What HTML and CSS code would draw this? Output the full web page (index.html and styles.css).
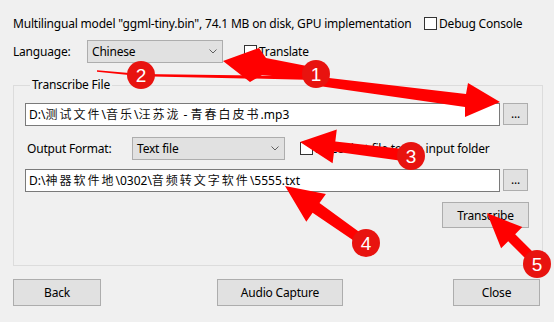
FILE: index.html
```html
<!DOCTYPE html>
<html lang="zh">

<head>
    <meta charset="UTF-8">
    <title>Transcribe</title>
    <link rel="stylesheet" href="styles.css">
</head>

<body>
    <div class="dialog">
        <div class="info-row">
            <span class="model-info">Multilingual model "ggml-tiny.bin", 74.1 MB on disk, GPU implementation</span>
            <label class="check"><span class="box"></span>Debug Console</label>
        </div>

        <div class="lang-row">
            <span class="lang-label">Language:</span>
            <div class="combo lang-combo">
                <span>Chinese</span>
                <svg class="chev" width="8" height="5" viewBox="0 0 8 5"><polyline points="0.5,0.5 4,4 7.5,0.5" /></svg>
            </div>
            <label class="check translate"><span class="box"></span>Translate</label>
        </div>

        <div class="group">
            <span class="legend">Transcribe File</span>

            <div class="path-row">
                <div class="edit">D:\<span class="cjk">测试文件</span>\<span class="cjk">音乐</span>\<span class="cjk">汪苏泷</span> - <span class="cjk">青春白皮书</span>.mp3</div>
                <button class="btn browse">...</button>
            </div>

            <div class="format-row">
                <span class="format-label">Output Format:</span>
                <div class="combo format-combo">
                    <span>Text file</span>
                    <svg class="chev" width="8" height="5" viewBox="0 0 8 5"><polyline points="0.5,0.5 4,4 7.5,0.5" /></svg>
                </div>
                <label class="check place"><span class="box"></span>Place that file to the input folder</label>
            </div>

            <div class="path-row out-row">
                <div class="edit">D:\<span class="cjk">神器软件地</span>\0302\<span class="cjk">音频转文字软件</span>\5555.txt</div>
                <button class="btn browse">...</button>
            </div>

            <div class="action-row">
                <button class="btn transcribe">Transcribe</button>
            </div>
        </div>

        <div class="footer">
            <button class="btn back">Back</button>
            <button class="btn capture">Audio Capture</button>
            <button class="btn close">Close</button>
        </div>
    </div>

    <!-- red annotation marks drawn over the dialog -->
    <svg class="marks" width="554" height="322" viewBox="0 0 554 322">
        <polygon points="97,70.3 141,74 305,76.3 305,79.7 141,76.2 97,71.7" />
        <polygon points="223,61 259,48 266,58 312,67 312,80 262,75 250,82" />
        <polygon points="312,76 466,94 468,83 500,102 465,117 465,107 312,85" />
        <polygon points="411.8,150 335.3,141.4 336.8,129.5 300,142 332.6,163.3 334.1,151.4 410.3,162" />
        <polygon points="368.9,238.9 319.5,203 325.9,194 285,186 306.3,221.8 312.6,212.8 363.1,247.1" />
        <polygon points="540.5,259.5 515.2,234.2 522.3,227.1 487,213 501.1,248.3 508.2,241.2 533.5,266.5" />

        <g class="badge"><circle cx="316" cy="74" r="14" /><text x="316" y="81">1</text></g>
        <g class="badge"><circle cx="141" cy="75" r="14" /><text x="141" y="82">2</text></g>
        <g class="badge"><circle cx="411" cy="156" r="14" /><text x="411" y="163">3</text></g>
        <g class="badge"><circle cx="366" cy="243" r="14" /><text x="366" y="250">4</text></g>
        <g class="badge"><circle cx="537" cy="264" r="14" /><text x="537" y="271">5</text></g>
    </svg>
</body>

</html>
```

FILE: styles.css
```css
body {
    margin: 0;
    width: 554px;
    height: 322px;
    overflow: hidden;
    position: relative;
    background-color: #f0f0f0;
    font-family: "Noto Sans", "Noto Sans CJK SC", sans-serif;
    font-size: 12px;
    letter-spacing: -0.2px;
    color: #000;
}

.dialog {
    padding: 13px 0 0 13px;
}

.info-row {
    display: flex;
    align-items: center;
    height: 20px;
}

.model-info {
    width: 411px;
    white-space: nowrap;
}

.check {
    display: flex;
    align-items: center;
    white-space: nowrap;
}

.box {
    width: 11px;
    height: 11px;
    border: 1px solid #333;
    background-color: #fff;
    margin-right: 2px;
}

.lang-row {
    display: flex;
    align-items: center;
    height: 23px;
    margin-top: 7px;
}

.lang-label {
    width: 74px;
}

.combo {
    box-sizing: border-box;
    height: 23px;
    display: flex;
    align-items: center;
    justify-content: space-between;
    padding: 0 5px 0 4px;
    border: 1px solid #adadad;
    background-color: #e1e1e1;
}

.chev polyline {
    fill: none;
    stroke: #606060;
    stroke-width: 1;
}

.lang-combo {
    width: 136px;
}

.translate {
    margin-left: 21px;
}

.group {
    box-sizing: border-box;
    width: 530px;
    margin-top: 22px;
    padding: 0 13px 37px 11px;
    border: 1px solid #dcdcdc;
}

.legend {
    display: block;
    width: max-content;
    margin: -9px 0 0 5px;
    padding: 0 2px;
    line-height: 16px;
    background-color: #f0f0f0;
}

.path-row {
    display: flex;
    align-items: flex-start;
    margin-top: 10px;
}

.out-row {
    margin-top: 9px;
}

.edit {
    box-sizing: border-box;
    width: 475px;
    height: 23px;
    padding-left: 3px;
    line-height: 21px;
    border: 1px solid #7a7a7a;
    background-color: #fff;
    white-space: nowrap;
    overflow: hidden;
    letter-spacing: 0;
}

.cjk {
    letter-spacing: 2px;
    color: #111;
}

.btn {
    box-sizing: border-box;
    padding: 0;
    border: 1px solid #adadad;
    background-color: #e1e1e1;
    font-family: "Noto Sans", sans-serif;
    font-size: 12px;
    letter-spacing: -0.2px;
    color: #000;
}

.browse {
    width: 25px;
    height: 22px;
    margin-left: 3px;
    line-height: 18px;
}

.format-row {
    display: flex;
    align-items: center;
    height: 23px;
    margin-top: 11px;
}

.format-label {
    width: 105px;
    padding-left: 2px;
}

.format-combo {
    width: 153px;
}

.place {
    margin-left: 15px;
}

.action-row {
    display: flex;
    justify-content: flex-end;
    margin-top: 10px;
}

.transcribe {
    width: 87px;
    height: 26px;
}

.footer {
    display: flex;
    margin-top: 13px;
}

.footer .btn {
    height: 27px;
}

.back {
    width: 88px;
}

.capture {
    width: 126px;
    margin-left: 116px;
}

.close {
    width: 87px;
    margin-left: 110px;
}

.marks {
    position: absolute;
    top: 0;
    left: 0;
    pointer-events: none;
}

.marks polygon {
    fill: #ff0000;
}

.badge circle {
    fill: #e8130f;
}

.badge text {
    fill: #fff;
    font-family: "Liberation Sans", Arial, sans-serif;
    font-size: 19px;
    letter-spacing: 0;
    text-anchor: middle;
}
```
